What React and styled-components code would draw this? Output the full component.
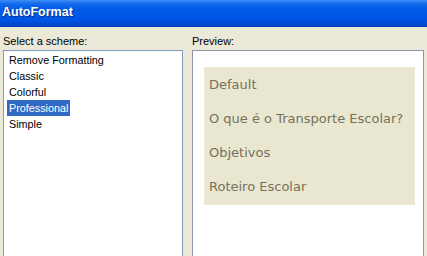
import React from 'react'
import styled, { createGlobalStyle } from 'styled-components'

const GlobalStyle = createGlobalStyle`
  html, body {
    margin: 0;
    padding: 0;
    background: #ece9d8;
    overflow: hidden;
  }
`

const schemes = ['Remove Formatting', 'Classic', 'Colorful', 'Professional', 'Simple']
const previewItems = ['Default', 'O que é o Transporte Escolar?', 'Objetivos', 'Roteiro Escolar']

export default function App() {
  return (
    <>
      <GlobalStyle />
      <Window>
        <TitleBar>AutoFormat</TitleBar>
        <Body>
          <Column>
            <Label>Select a scheme:</Label>
            <ListBox>
              {schemes.map(s => (
                <ListItem key={s} selected={s === 'Professional'}>{s}</ListItem>
              ))}
            </ListBox>
          </Column>
          <Column>
            <Label>Preview:</Label>
            <PreviewFrame>
              <PreviewBox>
                {previewItems.map(p => (
                  <PreviewItem key={p}>{p}</PreviewItem>
                ))}
              </PreviewBox>
            </PreviewFrame>
          </Column>
        </Body>
      </Window>
    </>
  )
}

const Window = styled.div`
  width: 427px;
  height: 256px;
  display: flex;
  flex-direction: column;
  background: #ece9d8;
  font-family: "Liberation Sans", Arial, sans-serif;
`

const TitleBar = styled.div`
  height: 27px;
  flex: none;
  box-sizing: border-box;
  padding: 4px 0 0 2px;
  color: #fff;
  font-weight: bold;
  font-size: 12.5px;
  line-height: 17px;
  background: linear-gradient(#3c8ef8 0%, #1268eb 15%, #0058e6 40%, #0054e3 75%, #0048cf 92%, #003db4 100%);
  text-shadow: 1px 1px 0 #0a2f8c;
`

const Body = styled.div`
  flex: 1;
  display: grid;
  grid-template-columns: 180px 232px;
  column-gap: 9px;
  padding: 0 3px;
  min-height: 0;
`

const Column = styled.div`
  display: flex;
  flex-direction: column;
  min-height: 0;
`

const Label = styled.div`
  height: 23px;
  box-sizing: border-box;
  padding-top: 7px;
  font-size: 11px;
  line-height: 14px;
  color: #000;
  white-space: nowrap;
`

const ListBox = styled.div`
  flex: 1;
  background: #fff;
  border: 1px solid #7f9db9;
  border-bottom: none;
  padding: 1px 0 0 3px;
  display: flex;
  flex-direction: column;
  align-items: flex-start;
`

const ListItem = styled.div`
  height: 16px;
  line-height: 16px;
  font-size: 10.8px;
  padding: 0 2px 0 2px;
  color: ${p => (p.selected ? '#fff' : '#000')};
  background: ${p => (p.selected ? '#316ac5' : 'transparent')};
`

const PreviewFrame = styled.div`
  flex: 1;
  background: #fff;
  border: 1px solid #8a97a8;
  border-bottom: none;
  padding: 16px 0 0 11px;
`

const PreviewBox = styled.div`
  width: 211px;
  height: 138px;
  box-sizing: border-box;
  padding: 0 4px;
  background: #e9e7d0;
  border: 1px solid #eeecd9;
  display: flex;
  flex-direction: column;
`

const PreviewItem = styled.div`
  height: 34px;
  line-height: 34px;
  font-family: "DejaVu Sans", Verdana, sans-serif;
  font-size: 13px;
  color: #75715b;
  white-space: nowrap;
`
